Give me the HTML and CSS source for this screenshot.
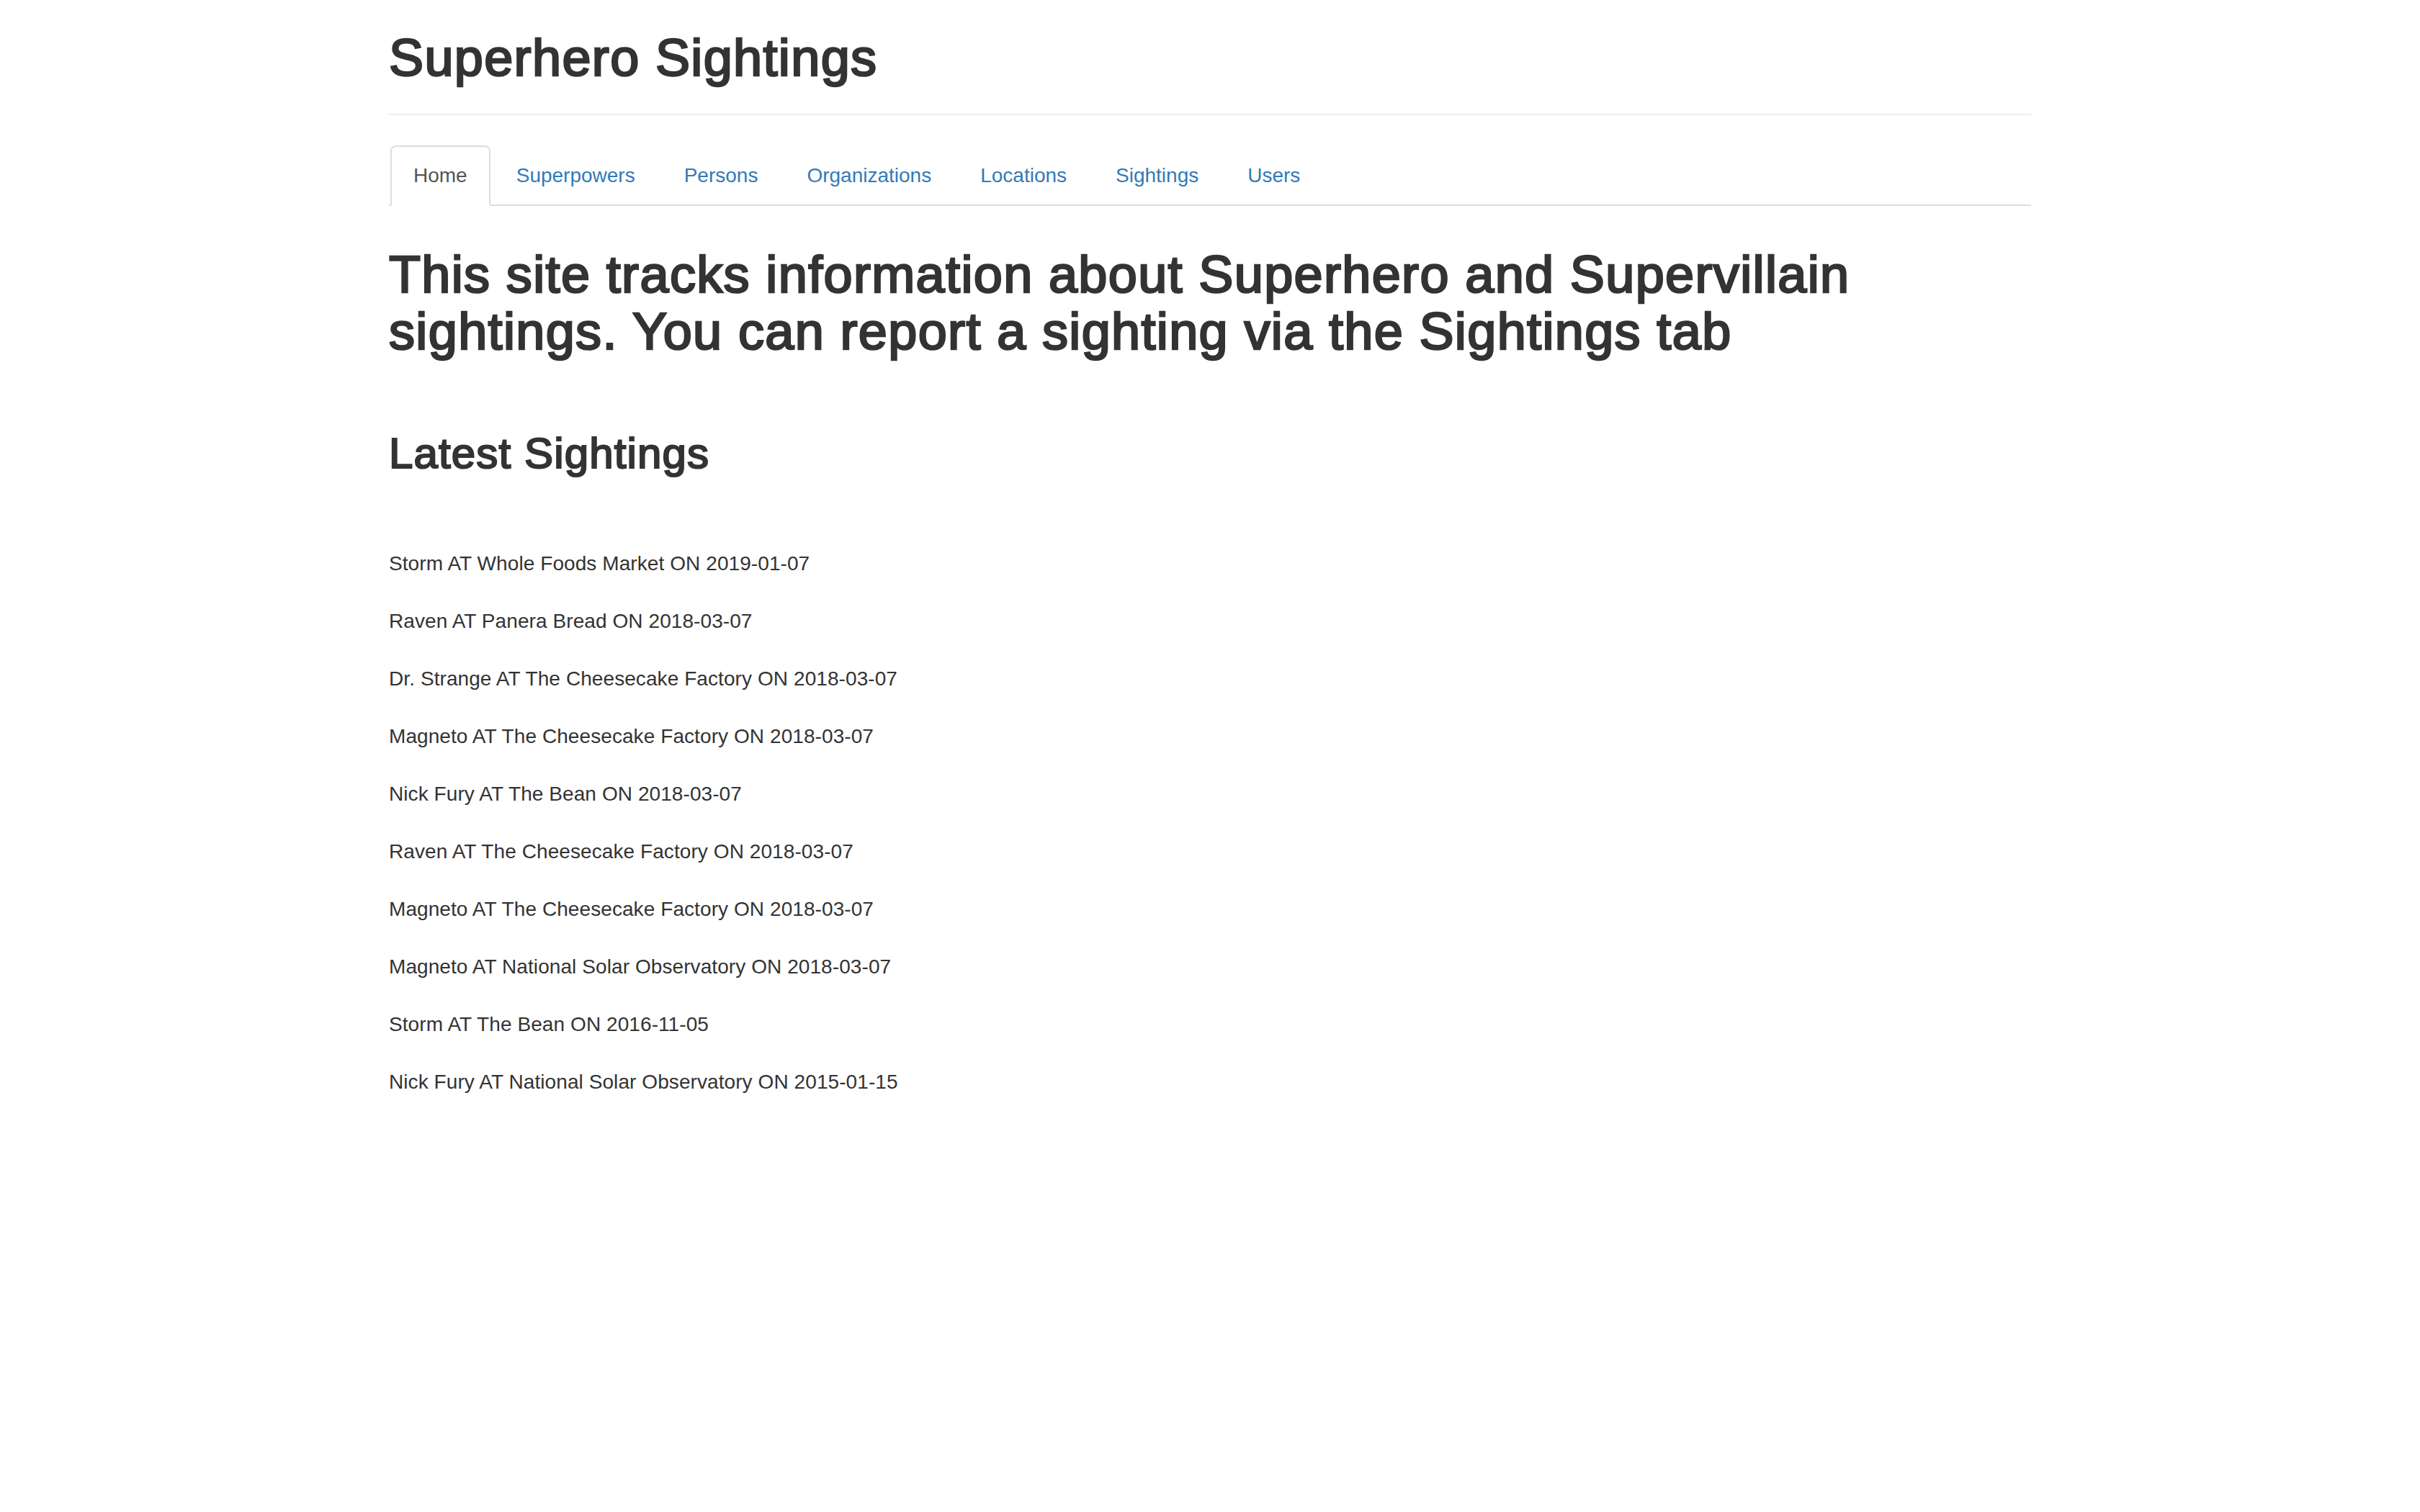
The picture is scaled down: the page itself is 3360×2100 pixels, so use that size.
FILE: index.html
```html
<!DOCTYPE html>
<html lang="en">
<head>
<meta charset="utf-8">
<title>Superhero Sightings</title>
<link rel="stylesheet" href="styles.css">
</head>
<body>
<div class="container">
  <h1 class="site-title">Superhero Sightings</h1>
  <hr class="divider">
  <ul class="tabs">
    <li class="tab active"><a href="#">Home</a></li>
    <li class="tab"><a href="#">Superpowers</a></li>
    <li class="tab"><a href="#">Persons</a></li>
    <li class="tab"><a href="#">Organizations</a></li>
    <li class="tab"><a href="#">Locations</a></li>
    <li class="tab"><a href="#">Sightings</a></li>
    <li class="tab"><a href="#">Users</a></li>
  </ul>
  <h1 class="intro">This site tracks information about Superhero and Supervillain sightings. You can report a sighting via the Sightings tab</h1>
  <h2 class="section-title">Latest Sightings</h2>
  <div class="sightings">
    <p class="sighting">Storm AT Whole Foods Market ON 2019-01-07</p>
    <p class="sighting">Raven AT Panera Bread ON 2018-03-07</p>
    <p class="sighting">Dr. Strange AT The Cheesecake Factory ON 2018-03-07</p>
    <p class="sighting">Magneto AT The Cheesecake Factory ON 2018-03-07</p>
    <p class="sighting">Nick Fury AT The Bean ON 2018-03-07</p>
    <p class="sighting">Raven AT The Cheesecake Factory ON 2018-03-07</p>
    <p class="sighting">Magneto AT The Cheesecake Factory ON 2018-03-07</p>
    <p class="sighting">Magneto AT National Solar Observatory ON 2018-03-07</p>
    <p class="sighting">Storm AT The Bean ON 2016-11-05</p>
    <p class="sighting">Nick Fury AT National Solar Observatory ON 2015-01-15</p>
  </div>
</div>
</body>
</html>
```

FILE: styles.css
```css
html, body {
  margin: 0;
  padding: 0;
  background: #fff;
}

body {
  font-family: "Liberation Sans", Helvetica, Arial, sans-serif;
  font-size: 28px;
  line-height: 40px;
  color: #333;
}

.container {
  width: 2280px;
  padding: 0 30px;
  margin: 0 auto;
}

.site-title,
.intro,
.section-title {
  font-weight: 400;
  color: #333;
  letter-spacing: 0.019em;
  -webkit-text-stroke-color: #333;
}

.site-title {
  font-size: 72px;
  line-height: 1.1;
  margin: 41px 0 0;
  -webkit-text-stroke-width: 2.6px;
}

.divider {
  border: 0;
  border-top: 2px solid #eee;
  height: 0;
  margin: 38px 0 42px;
}

.tabs {
  display: flex;
  list-style: none;
  margin: 0;
  padding: 0 0 0 2px;
  border-bottom: 2px solid #ddd;
}

.tab {
  margin-bottom: -2px;
}

.tab a {
  display: block;
  padding: 20px 30px;
  line-height: 40px;
  border: 2px solid transparent;
  border-radius: 8px 8px 0 0;
  margin-right: 4px;
  color: #337ab7;
  text-decoration: none;
}

.tab.active a {
  color: #555;
  background: #fff;
  border-color: #ddd #ddd transparent;
}

.intro {
  font-size: 72px;
  line-height: 1.1;
  margin: 56px 0 0;
  -webkit-text-stroke-width: 2.6px;
}

.section-title {
  font-size: 60px;
  line-height: 1.1;
  margin: 96px 0 0;
  -webkit-text-stroke-width: 2.2px;
}

.sightings {
  display: flex;
  flex-direction: column;
  gap: 40px;
  margin-top: 100px;
}

.sighting {
  margin: 0;
  line-height: 40px;
  letter-spacing: 0.08px;
}
```
